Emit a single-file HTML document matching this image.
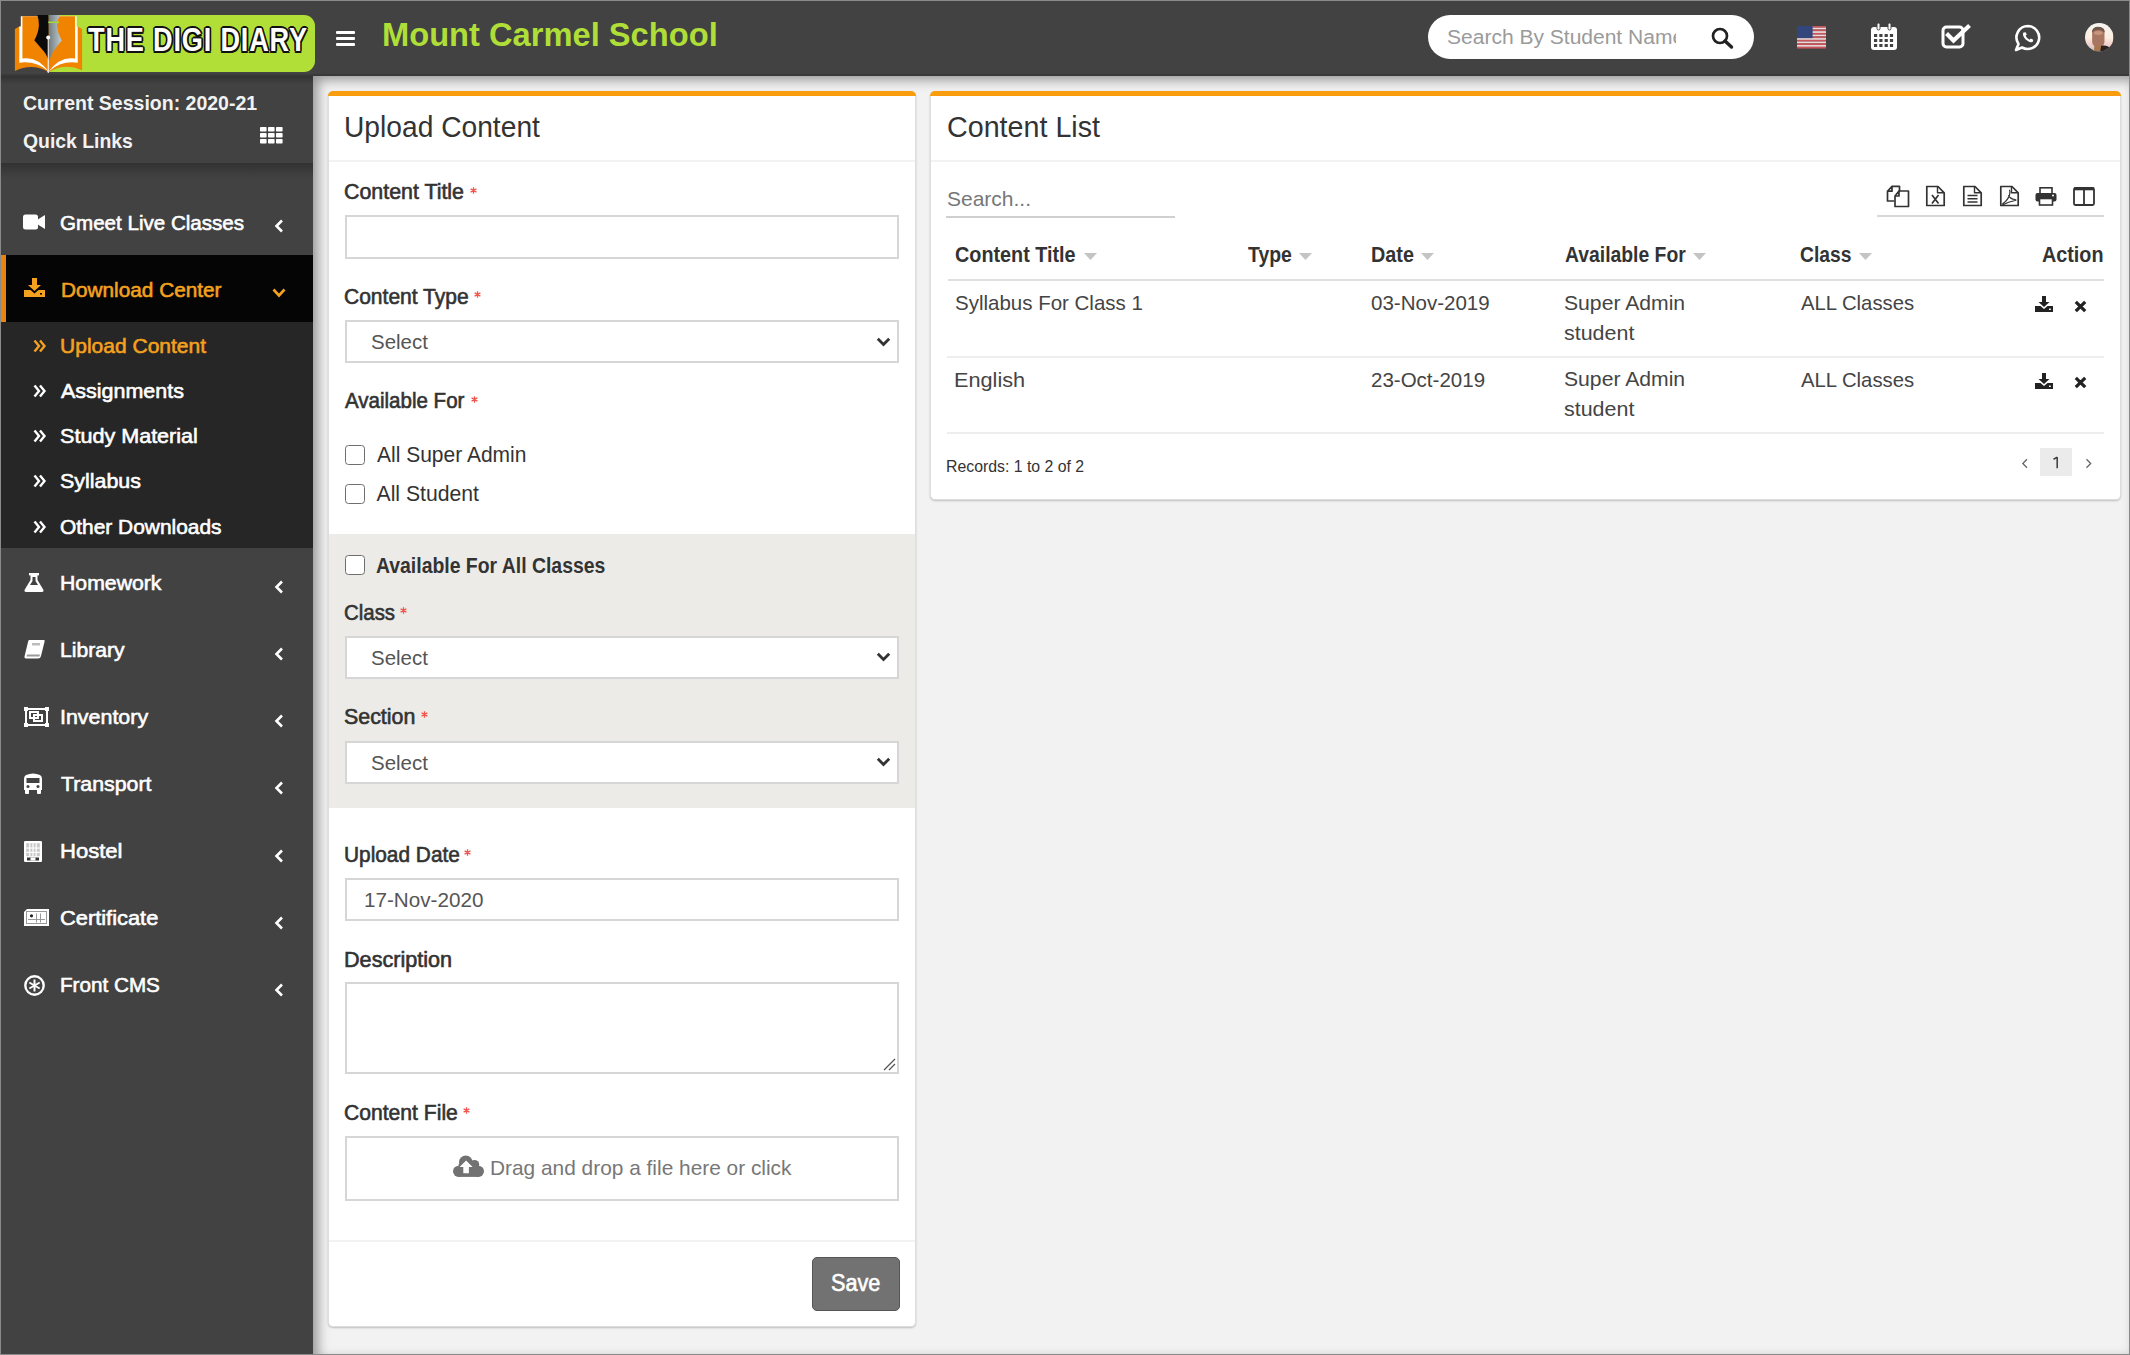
<!DOCTYPE html><html><head><meta charset="utf-8"><style>
*{box-sizing:border-box;margin:0;padding:0}
html,body{width:2130px;height:1355px;overflow:hidden;background:#f2f2f2;font-family:"Liberation Sans",sans-serif}
.a{position:absolute}
.t{position:absolute;white-space:nowrap;transform-origin:0 0;font-family:"Liberation Sans",sans-serif}
svg{position:absolute;overflow:visible}
</style></head><body><div class="a" style="left:313px;top:76px;width:1817px;height:1279px;box-shadow:inset 5px 4px 12px rgba(0,0,0,.38)"></div><div class="a" style="left:0;top:0;width:2130px;height:76px;background:#424242;border-bottom:2px solid #393939"></div><div class="a" style="left:47px;top:15px;width:268px;height:57px;background:#b1df37;border-radius:0 11px 11px 0"></div><svg class="a" style="left:15px;top:15px" width="68" height="58" viewBox="0 0 68 58">
<defs><linearGradient id="nibg" x1="0" y1="0" x2="1" y2="0"><stop offset="0" stop-color="#6f7c80"/><stop offset="1" stop-color="#c2cdd1"/></linearGradient></defs>
<path d="M-0.1 14.1 L4.3 11.5 L33.7 11.5 L33.7 57 Q17 47.5 -0.1 56 Z" fill="#f08300"/>
<path d="M67.1 14.1 L62.7 11.5 L33.7 11.5 L33.7 57 Q50 47.5 67.1 55.2 Z" fill="#f08300"/>
<path d="M5.8 1.2 H33.7 V56.5 Q21 45.5 4.3 47.7 V11.5 L5.8 11.5 Z" fill="#ffffff"/>
<path d="M61.6 1.2 H33.7 V56.5 Q46 45.5 62.7 47.7 V11.5 L61.6 11.5 Z" fill="#ffffff"/>
<path d="M7.4 1.2 H33.7 V56.5 Q22 41 7.4 43.5 Z" fill="#f08300"/>
<path d="M60.1 1.2 H33.7 V56.5 Q45 41 60.1 43.5 Z" fill="#f08300"/>
<path d="M22.4 0 H33.7 V45.6 Q31 38 27 34.3 L19.3 25.2 Q23.5 18 23.9 10.5 Q23.8 4 22.4 0 Z" fill="#0b0b0b"/>
<path d="M33.7 0 H45.1 Q42 5 42 10.5 Q42.5 18 46.7 25.5 L39.9 34.3 Q36 39 34.3 45.6 Z" fill="url(#nibg)"/>
<rect x="33.2" y="6.5" width="11" height="1.6" fill="#a6d83a"/>
<circle cx="33.2" cy="22.4" r="2" fill="#fff"/>
<rect x="32.7" y="23" width="1.1" height="35" fill="#f4f4f4"/>
</svg><div class="t" style="left:88px;top:20px;font-size:33.5px;line-height:40px;font-weight:700;color:#fff;letter-spacing:1.0px;transform:scaleX(0.81);text-shadow:-2px 0 0 #111,2px 0 0 #111,0 -2px 0 #111,0 2px 0 #111,-1.5px -1.5px 0 #111,1.5px -1.5px 0 #111,-1.5px 1.5px 0 #111,1.5px 1.5px 0 #111">THE DIGI DIARY</div><div class="a" style="left:336px;top:31px;width:19px;height:3px;background:#fff;border-radius:1px"></div><div class="a" style="left:336px;top:37px;width:19px;height:3px;background:#fff;border-radius:1px"></div><div class="a" style="left:336px;top:43px;width:19px;height:3px;background:#fff;border-radius:1px"></div><div class="t" style="left:382.05px;top:18.03px;font-size:33.5px;line-height:33.5px;font-weight:700;color:#b0de38;transform:scaleX(0.9750);">Mount Carmel School</div><div class="a" style="left:1428px;top:15px;width:326px;height:44px;background:#fff;border-radius:22px"></div><div class="a" style="left:1440px;top:15px;width:236px;height:44px;overflow:hidden"><div class="t" style="left:1447.02px;top:27.37px;font-size:20.5px;line-height:20.5px;font-weight:400;color:#9a9a9a;transform:scaleX(0.9850);">Search By Student Name</div></div><svg class="a" style="left:1711px;top:27px" width="23" height="21" viewBox="0 0 23 21"><circle cx="9" cy="9" r="7" fill="none" stroke="#222" stroke-width="2.7"/><path d="M14 14 L20.5 20" stroke="#222" stroke-width="3.4" stroke-linecap="round"/></svg><svg class="a" style="left:1797px;top:25.5px" width="29" height="22.5" viewBox="0 0 29 22.5"><rect x="0" y="0.000" width="29" height="1.781" fill="#c9545c"/><rect x="0" y="1.731" width="29" height="1.781" fill="#eedcdc"/><rect x="0" y="3.462" width="29" height="1.781" fill="#c9545c"/><rect x="0" y="5.192" width="29" height="1.781" fill="#eedcdc"/><rect x="0" y="6.923" width="29" height="1.781" fill="#c9545c"/><rect x="0" y="8.654" width="29" height="1.781" fill="#eedcdc"/><rect x="0" y="10.385" width="29" height="1.781" fill="#c9545c"/><rect x="0" y="12.115" width="29" height="1.781" fill="#eedcdc"/><rect x="0" y="13.846" width="29" height="1.781" fill="#c9545c"/><rect x="0" y="15.577" width="29" height="1.781" fill="#eedcdc"/><rect x="0" y="17.308" width="29" height="1.781" fill="#c9545c"/><rect x="0" y="19.038" width="29" height="1.781" fill="#eedcdc"/><rect x="0" y="20.769" width="29" height="1.781" fill="#c9545c"/><rect x="0" y="0" width="15.6" height="12.1" fill="#33467c"/></svg><svg class="a" style="left:1870px;top:23px" width="28" height="28" viewBox="0 0 28 28"><rect x="1" y="4" width="26" height="23" rx="3" fill="#fff"/><rect x="7" y="0" width="3" height="7" rx="1.5" fill="#fff" stroke="#424242" stroke-width="1"/><rect x="18" y="0" width="3" height="7" rx="1.5" fill="#fff" stroke="#424242" stroke-width="1"/><rect x="4.0" y="11" width="3.2" height="3" fill="#424242"/><rect x="9.3" y="11" width="3.2" height="3" fill="#424242"/><rect x="14.6" y="11" width="3.2" height="3" fill="#424242"/><rect x="19.9" y="11" width="3.2" height="3" fill="#424242"/><rect x="4.0" y="16" width="3.2" height="3" fill="#424242"/><rect x="9.3" y="16" width="3.2" height="3" fill="#424242"/><rect x="14.6" y="16" width="3.2" height="3" fill="#424242"/><rect x="19.9" y="16" width="3.2" height="3" fill="#424242"/><rect x="4.0" y="21" width="3.2" height="3" fill="#424242"/><rect x="9.3" y="21" width="3.2" height="3" fill="#424242"/><rect x="14.6" y="21" width="3.2" height="3" fill="#424242"/><rect x="19.9" y="21" width="3.2" height="3" fill="#424242"/></svg><svg class="a" style="left:1941px;top:24px" width="30" height="26" viewBox="0 0 30 26"><rect x="2" y="3" width="20" height="20" rx="3.5" fill="none" stroke="#fff" stroke-width="3"/><path d="M7 11 L12.5 16.5 L27 3" fill="none" stroke="#fff" stroke-width="4.2" stroke-linecap="square"/></svg><svg class="a" style="left:2014px;top:24px" width="28" height="27" viewBox="0 0 28 27"><path d="M14 2 A11.5 11.5 0 1 1 8 23.5 L2 26 L4.5 20 A11.5 11.5 0 0 1 14 2 Z" fill="none" stroke="#fff" stroke-width="2.6" stroke-linejoin="round"/><path d="M9.5 8.5 Q8.5 9.5 9.2 11.8 Q11 16 15.5 18 Q17.8 18.8 19 17.5 L19.2 15.8 L16.8 14.6 L15.6 15.8 Q12.8 14.5 11.6 11.8 L12.8 10.6 L11.6 8.2 Z" fill="#fff"/></svg><svg class="a" style="left:2085px;top:22.5px" width="28.5" height="28.5" viewBox="0 0 30 30"><defs><clipPath id="avc"><circle cx="15" cy="15" r="15"/></clipPath><linearGradient id="avg" x1="0" y1="0" x2="0" y2="1"><stop offset="0" stop-color="#f4f3f1"/><stop offset="0.5" stop-color="#fcefe2"/><stop offset="0.78" stop-color="#eecdc8"/><stop offset="1" stop-color="#b4c9df"/></linearGradient></defs><g clip-path="url(#avc)"><rect width="30" height="30" fill="url(#avg)"/><path d="M7.5 9 Q8 4.5 14 4.5 Q20 4.5 20.5 9 V20 Q20 25 14 26 Q8 25 7.5 20 Z" fill="#a97662"/><path d="M7.3 10 Q7.5 4 14 4 Q20.8 4.2 20.8 10 Q17 7 14 7.2 Q10 7.3 7.3 10Z" fill="#6e584c"/><ellipse cx="14" cy="10.5" rx="4.5" ry="2" fill="#c9967b"/><path d="M10 24 L18 24 L19 30 H9 Z" fill="#a8774f"/><path d="M17 24 Q23 22.5 27 27 L28 30 H16 Z" fill="#2b2220"/></g></svg><div class="a" style="left:0;top:76px;width:313px;height:1279px;background:#424242"></div><div class="a" style="left:0;top:163px;width:313px;height:15px;background:linear-gradient(#323232,#424242)"></div><div class="a" style="left:0;top:76px;width:313px;height:8px;background:linear-gradient(rgba(0,0,0,.25),rgba(0,0,0,0))"></div><div class="t" style="left:23.14px;top:92.96px;font-size:20.4px;line-height:20.4px;font-weight:700;color:#f2f2f2;transform:scaleX(0.9564);">Current Session: 2020-21</div><div class="t" style="left:23.15px;top:130.96px;font-size:20.4px;line-height:20.4px;font-weight:700;color:#f2f2f2;transform:scaleX(0.9509);">Quick Links</div><svg class="a" style="left:260px;top:127px" width="23" height="17" viewBox="0 0 23 17"><rect x="0.0" y="0.0" width="6.6" height="4.6" rx="0.8" fill="#fff"/><rect x="8.0" y="0.0" width="6.6" height="4.6" rx="0.8" fill="#fff"/><rect x="16.0" y="0.0" width="6.6" height="4.6" rx="0.8" fill="#fff"/><rect x="0.0" y="6.0" width="6.6" height="4.6" rx="0.8" fill="#fff"/><rect x="8.0" y="6.0" width="6.6" height="4.6" rx="0.8" fill="#fff"/><rect x="16.0" y="6.0" width="6.6" height="4.6" rx="0.8" fill="#fff"/><rect x="0.0" y="12.0" width="6.6" height="4.6" rx="0.8" fill="#fff"/><rect x="8.0" y="12.0" width="6.6" height="4.6" rx="0.8" fill="#fff"/><rect x="16.0" y="12.0" width="6.6" height="4.6" rx="0.8" fill="#fff"/></svg><div class="a" style="left:0;top:255px;width:313px;height:67px;background:#050505"></div><div class="a" style="left:1px;top:255px;width:5px;height:67px;background:#e8830e"></div><div class="a" style="left:0;top:322px;width:313px;height:226px;background:#262626"></div><div class="t" style="left:59.82px;top:211.55px;font-size:21px;line-height:21px;font-weight:400;color:#ffffff;-webkit-text-stroke:0.6px #ffffff;transform:scaleX(0.9797);">Gmeet Live Classes</div><svg class="a" style="left:274px;top:219px" width="10" height="14" viewBox="0 0 10 14"><path d="M8 1.5 L2.5 7 L8 12.5" fill="none" stroke="#fff" stroke-width="2.6"/></svg><div class="t" style="left:59.89px;top:571.85px;font-size:21px;line-height:21px;font-weight:400;color:#ffffff;-webkit-text-stroke:0.6px #ffffff;transform:scaleX(1.0110);">Homework</div><svg class="a" style="left:274px;top:580px" width="10" height="14" viewBox="0 0 10 14"><path d="M8 1.5 L2.5 7 L8 12.5" fill="none" stroke="#fff" stroke-width="2.6"/></svg><div class="t" style="left:59.89px;top:639.05px;font-size:21px;line-height:21px;font-weight:400;color:#ffffff;-webkit-text-stroke:0.6px #ffffff;transform:scaleX(1.0063);">Library</div><svg class="a" style="left:274px;top:647px" width="10" height="14" viewBox="0 0 10 14"><path d="M8 1.5 L2.5 7 L8 12.5" fill="none" stroke="#fff" stroke-width="2.6"/></svg><div class="t" style="left:59.88px;top:706.05px;font-size:21px;line-height:21px;font-weight:400;color:#ffffff;-webkit-text-stroke:0.6px #ffffff;transform:scaleX(1.0198);">Inventory</div><svg class="a" style="left:274px;top:714px" width="10" height="14" viewBox="0 0 10 14"><path d="M8 1.5 L2.5 7 L8 12.5" fill="none" stroke="#fff" stroke-width="2.6"/></svg><div class="t" style="left:60.90px;top:773.05px;font-size:21px;line-height:21px;font-weight:400;color:#ffffff;-webkit-text-stroke:0.6px #ffffff;transform:scaleX(1.0157);">Transport</div><svg class="a" style="left:274px;top:781px" width="10" height="14" viewBox="0 0 10 14"><path d="M8 1.5 L2.5 7 L8 12.5" fill="none" stroke="#fff" stroke-width="2.6"/></svg><div class="t" style="left:59.85px;top:840.15px;font-size:21px;line-height:21px;font-weight:400;color:#ffffff;-webkit-text-stroke:0.6px #ffffff;transform:scaleX(1.0500);">Hostel</div><svg class="a" style="left:274px;top:848.5px" width="10" height="14" viewBox="0 0 10 14"><path d="M8 1.5 L2.5 7 L8 12.5" fill="none" stroke="#fff" stroke-width="2.6"/></svg><div class="t" style="left:59.92px;top:974.15px;font-size:21px;line-height:21px;font-weight:400;color:#ffffff;-webkit-text-stroke:0.6px #ffffff;transform:scaleX(0.9840);">Front CMS</div><svg class="a" style="left:274px;top:982.5px" width="10" height="14" viewBox="0 0 10 14"><path d="M8 1.5 L2.5 7 L8 12.5" fill="none" stroke="#fff" stroke-width="2.6"/></svg><div class="t" style="left:59.86px;top:907.15px;font-size:21px;line-height:21px;font-weight:400;color:#ffffff;-webkit-text-stroke:0.6px #ffffff;transform:scaleX(1.0398);">Certificate</div><svg class="a" style="left:274px;top:915.5px" width="10" height="14" viewBox="0 0 10 14"><path d="M8 1.5 L2.5 7 L8 12.5" fill="none" stroke="#fff" stroke-width="2.6"/></svg><div class="t" style="left:60.61px;top:278.55px;font-size:21px;line-height:21px;font-weight:400;color:#f4a11f;-webkit-text-stroke:0.6px #f4a11f;transform:scaleX(0.9894);">Download Center</div><svg class="a" style="left:272px;top:288px" width="14" height="10" viewBox="0 0 14 10"><path d="M1.5 1.5 L7 7.5 L12.5 1.5" fill="none" stroke="#f4a11f" stroke-width="2.6"/></svg><div class="t" style="left:60.10px;top:334.95px;font-size:21px;line-height:21px;font-weight:400;color:#f4a11f;-webkit-text-stroke:0.6px #f4a11f;">Upload Content</div><div class="t" style="left:61.10px;top:380.15px;font-size:21px;line-height:21px;font-weight:400;color:#ffffff;-webkit-text-stroke:0.6px #ffffff;transform:scaleX(1.0225);">Assignments</div><div class="t" style="left:60.07px;top:425.15px;font-size:21px;line-height:21px;font-weight:400;color:#ffffff;-webkit-text-stroke:0.6px #ffffff;transform:scaleX(1.0273);">Study Material</div><div class="t" style="left:60.08px;top:470.15px;font-size:21px;line-height:21px;font-weight:400;color:#ffffff;-webkit-text-stroke:0.6px #ffffff;transform:scaleX(1.0192);">Syllabus</div><div class="t" style="left:60.10px;top:515.55px;font-size:21px;line-height:21px;font-weight:400;color:#ffffff;-webkit-text-stroke:0.6px #ffffff;transform:scaleX(0.9957);">Other Downloads</div><svg class="a" style="left:33px;top:339px" width="13" height="14" viewBox="0 0 13 14"><path d="M1.5 1.5 L6 7 L1.5 12.5 M7 1.5 L11.5 7 L7 12.5" fill="none" stroke="#f4a11f" stroke-width="2.4"/></svg><svg class="a" style="left:33px;top:384px" width="13" height="14" viewBox="0 0 13 14"><path d="M1.5 1.5 L6 7 L1.5 12.5 M7 1.5 L11.5 7 L7 12.5" fill="none" stroke="#fff" stroke-width="2.4"/></svg><svg class="a" style="left:33px;top:429px" width="13" height="14" viewBox="0 0 13 14"><path d="M1.5 1.5 L6 7 L1.5 12.5 M7 1.5 L11.5 7 L7 12.5" fill="none" stroke="#fff" stroke-width="2.4"/></svg><svg class="a" style="left:33px;top:474px" width="13" height="14" viewBox="0 0 13 14"><path d="M1.5 1.5 L6 7 L1.5 12.5 M7 1.5 L11.5 7 L7 12.5" fill="none" stroke="#fff" stroke-width="2.4"/></svg><svg class="a" style="left:33px;top:520px" width="13" height="14" viewBox="0 0 13 14"><path d="M1.5 1.5 L6 7 L1.5 12.5 M7 1.5 L11.5 7 L7 12.5" fill="none" stroke="#fff" stroke-width="2.4"/></svg><svg class="a" style="left:23px;top:214px" width="23" height="16" viewBox="0 0 23 16"><rect x="0" y="0.5" width="15" height="15" rx="2.5" fill="#fff"/><path d="M14 6 L22 1 L22 15 L14 10 Z" fill="#fff"/></svg><svg class="a" style="left:24px;top:278px" width="21" height="19" viewBox="0 0 21 19"><path d="M8 0 H13 V7 H17 L10.5 13 L4 7 H8 Z" fill="#f4a11f"/><path d="M0 12 H6.5 L10.5 15.5 L14.5 12 H21 V19 H0 Z" fill="#f4a11f"/><rect x="16" y="15" width="2" height="1.6" fill="#050505"/></svg><svg class="a" style="left:24px;top:573px" width="20" height="19" viewBox="0 0 20 19"><rect x="5" y="0" width="10" height="2.4" fill="#fff"/><path d="M6.5 2 V7 L0.5 17 Q0 19 2 19 H18 Q20 19 19.5 17 L13.5 7 V2 Z" fill="#fff"/><path d="M8.5 4 V8 L6 12 H14 L11.5 8 V4Z" fill="#424242"/></svg><svg class="a" style="left:24px;top:640px" width="21" height="19" viewBox="0 0 21 19"><path d="M5 0 H20 Q21 0 20.6 1.5 L17 16 Q16.5 18.5 14 18.5 H2 Q0 18.5 0.5 16.5 L4 2 Q4.5 0 5 0Z" fill="#fff"/><path d="M3 14.5 H16 L15.4 16.5 H2.5 Z" fill="#9a9a9a"/><rect x="8" y="3" width="8" height="2.5" fill="#bdbdbd"/></svg><svg class="a" style="left:24px;top:707px" width="25" height="20" viewBox="0 0 25 20"><rect x="2" y="2" width="21" height="16" fill="none" stroke="#fff" stroke-width="2"/><rect x="0" y="0" width="4" height="4" fill="#fff"/><rect x="21" y="0" width="4" height="4" fill="#fff"/><rect x="0" y="16" width="4" height="4" fill="#fff"/><rect x="21" y="16" width="4" height="4" fill="#fff"/><rect x="6" y="5" width="8" height="6" fill="none" stroke="#fff" stroke-width="2"/><rect x="10" y="8" width="8" height="6" fill="none" stroke="#fff" stroke-width="2"/></svg><svg class="a" style="left:23px;top:773px" width="20" height="21" viewBox="0 0 20 21"><path d="M3 2 Q10 -1 17 2 Q19 3 19 6 V17 H1 V6 Q1 3 3 2Z" fill="#fff"/><rect x="3.5" y="5" width="13" height="5" fill="#424242"/><rect x="2" y="16" width="4" height="5" rx="1" fill="#fff"/><rect x="14" y="16" width="4" height="5" rx="1" fill="#fff"/><circle cx="5" cy="13.5" r="1.5" fill="#424242"/><circle cx="15" cy="13.5" r="1.5" fill="#424242"/></svg><svg class="a" style="left:24px;top:841px" width="18" height="21" viewBox="0 0 18 21"><rect x="0" y="0" width="18" height="21" rx="1.2" fill="#fff"/><rect x="2.2" y="2.2" width="13.6" height="13" fill="#c8c8c8"/><g fill="#fff"><rect x="5.2" y="2.2" width="1.2" height="13"/><rect x="8.4" y="2.2" width="1.2" height="13"/><rect x="11.6" y="2.2" width="1.2" height="13"/><rect x="2.2" y="6.5" width="13.6" height="1.1"/><rect x="2.2" y="10.8" width="13.6" height="1.1"/></g><rect x="3" y="16.5" width="12" height="3" fill="#333"/><rect x="6.5" y="16.5" width="5" height="3" fill="#fff"/></svg><svg class="a" style="left:24px;top:909px" width="25" height="17" viewBox="0 0 25 17"><path d="M0 3 L3 0 H25 V17 H0 Z" fill="#fff"/><rect x="2.5" y="2.5" width="20" height="12" fill="none" stroke="#9a9a9a" stroke-width="1"/><circle cx="7.5" cy="6.8" r="1.6" fill="#222"/><g fill="#9a9a9a"><rect x="12" y="4.5" width="1" height="9"/><rect x="16" y="4.5" width="1" height="9"/><rect x="4" y="10" width="17" height="1"/></g></svg><svg class="a" style="left:24px;top:975px" width="21" height="21" viewBox="0 0 21 21"><circle cx="10.5" cy="10.5" r="9.2" fill="none" stroke="#fff" stroke-width="2.4"/><g stroke="#fff" stroke-width="2"><path d="M10.5 4.5 V16.5"/><path d="M5.3 7.5 L15.7 13.5"/><path d="M5.3 13.5 L15.7 7.5"/></g></svg><div class="a" style="left:1440px;top:15px;width:236px;height:44px;overflow:hidden"><div class="t" style="left:6.97px;top:12.37px;font-size:20.5px;line-height:20.5px;color:#9a9a9a;transform:scaleX(1.025)">Search By Student Name</div></div><div class="a" style="left:328px;top:91px;width:588px;height:1236px;background:#fff;border:1px solid #dedede;border-top:none;border-radius:5px;box-shadow:0 1px 2px rgba(0,0,0,.22)"></div><div class="a" style="left:328px;top:91px;width:588px;height:5px;background:#f99d0e;border-radius:5px 5px 0 0"></div><div class="a" style="left:329px;top:160px;width:586px;height:1.5px;background:#f2f2f2"></div><div class="t" style="left:343.50px;top:111.94px;font-size:29.6px;line-height:29.6px;font-weight:400;color:#333333;transform:scaleX(0.9525);">Upload Content</div><div class="t" style="left:344.39px;top:181.08px;font-size:21.2px;line-height:21.2px;font-weight:400;color:#333333;-webkit-text-stroke:0.6px #333333;transform:scaleX(1.0085);">Content Title</div><svg class="a" style="left:470px;top:187px" width="7" height="7" viewBox="0 0 7 7"><path d="M3.5 0.3 V6.7 M0.6 1.9 L6.4 5.1 M0.6 5.1 L6.4 1.9" stroke="#f0544c" stroke-width="1.3"/></svg><div class="a" style="left:345px;top:215px;width:554px;height:44px;background:#fff;border:2px solid #d6d6d6"></div><div class="t" style="left:344.41px;top:286.08px;font-size:21.2px;line-height:21.2px;font-weight:400;color:#333333;-webkit-text-stroke:0.6px #333333;transform:scaleX(0.9919);">Content Type</div><svg class="a" style="left:474px;top:291px" width="7" height="7" viewBox="0 0 7 7"><path d="M3.5 0.3 V6.7 M0.6 1.9 L6.4 5.1 M0.6 5.1 L6.4 1.9" stroke="#f0544c" stroke-width="1.3"/></svg><div class="a" style="left:345px;top:320px;width:554px;height:43px;background:#fff;border:2px solid #d6d6d6"></div><div class="t" style="left:371.38px;top:332.30px;font-size:20px;line-height:20px;font-weight:400;color:#555555;transform:scaleX(1.0236);">Select</div><svg class="a" style="left:876px;top:337px" width="15" height="10" viewBox="0 0 15 10"><path d="M1.8 1.8 L7.5 7.5 L13.2 1.8" fill="none" stroke="#333" stroke-width="2.8"/></svg><div class="t" style="left:345.40px;top:390.38px;font-size:21.2px;line-height:21.2px;font-weight:400;color:#333333;-webkit-text-stroke:0.6px #333333;transform:scaleX(0.9685);">Available For</div><svg class="a" style="left:471px;top:396px" width="7" height="7" viewBox="0 0 7 7"><path d="M3.5 0.3 V6.7 M0.6 1.9 L6.4 5.1 M0.6 5.1 L6.4 1.9" stroke="#f0544c" stroke-width="1.3"/></svg><div class="a" style="left:345px;top:445px;width:20px;height:20px;background:#fff;border:1.8px solid #6e6e6e;border-radius:3.5px"></div><div class="t" style="left:376.50px;top:443.88px;font-size:21.2px;line-height:21.2px;font-weight:400;color:#333333;transform:scaleX(0.9913);">All Super Admin</div><div class="a" style="left:345px;top:484px;width:20px;height:20px;background:#fff;border:1.8px solid #6e6e6e;border-radius:3.5px"></div><div class="t" style="left:376.50px;top:482.58px;font-size:21.2px;line-height:21.2px;font-weight:400;color:#333333;">All Student</div><div class="a" style="left:329px;top:534px;width:586px;height:274px;background:#ecebe7"></div><div class="a" style="left:345px;top:555px;width:20px;height:20px;background:#fff;border:1.8px solid #6e6e6e;border-radius:3.5px"></div><div class="t" style="left:375.58px;top:555.08px;font-size:21.2px;line-height:21.2px;font-weight:700;color:#333333;transform:scaleX(0.9157);">Available For All Classes</div><div class="t" style="left:344.44px;top:601.58px;font-size:21.2px;line-height:21.2px;font-weight:400;color:#333333;-webkit-text-stroke:0.6px #333333;transform:scaleX(0.9635);">Class</div><svg class="a" style="left:400px;top:607px" width="7" height="7" viewBox="0 0 7 7"><path d="M3.5 0.3 V6.7 M0.6 1.9 L6.4 5.1 M0.6 5.1 L6.4 1.9" stroke="#f0544c" stroke-width="1.3"/></svg><div class="a" style="left:345px;top:636px;width:554px;height:43px;background:#fff;border:2px solid #d6d6d6"></div><div class="t" style="left:371.38px;top:648.00px;font-size:20px;line-height:20px;font-weight:400;color:#555555;transform:scaleX(1.0236);">Select</div><svg class="a" style="left:876px;top:652px" width="15" height="10" viewBox="0 0 15 10"><path d="M1.8 1.8 L7.5 7.5 L13.2 1.8" fill="none" stroke="#333" stroke-width="2.8"/></svg><div class="t" style="left:344.39px;top:706.18px;font-size:21.2px;line-height:21.2px;font-weight:400;color:#333333;-webkit-text-stroke:0.6px #333333;transform:scaleX(1.0087);">Section</div><svg class="a" style="left:421px;top:711px" width="7" height="7" viewBox="0 0 7 7"><path d="M3.5 0.3 V6.7 M0.6 1.9 L6.4 5.1 M0.6 5.1 L6.4 1.9" stroke="#f0544c" stroke-width="1.3"/></svg><div class="a" style="left:345px;top:741px;width:554px;height:43px;background:#fff;border:2px solid #d6d6d6"></div><div class="t" style="left:371.38px;top:752.70px;font-size:20px;line-height:20px;font-weight:400;color:#555555;transform:scaleX(1.0236);">Select</div><svg class="a" style="left:876px;top:757px" width="15" height="10" viewBox="0 0 15 10"><path d="M1.8 1.8 L7.5 7.5 L13.2 1.8" fill="none" stroke="#333" stroke-width="2.8"/></svg><div class="t" style="left:344.42px;top:844.38px;font-size:21.2px;line-height:21.2px;font-weight:400;color:#333333;-webkit-text-stroke:0.6px #333333;transform:scaleX(0.9836);">Upload Date</div><svg class="a" style="left:464px;top:849px" width="7" height="7" viewBox="0 0 7 7"><path d="M3.5 0.3 V6.7 M0.6 1.9 L6.4 5.1 M0.6 5.1 L6.4 1.9" stroke="#f0544c" stroke-width="1.3"/></svg><div class="a" style="left:345px;top:878px;width:554px;height:43px;background:#fff;border:2px solid #d6d6d6"></div><div class="t" style="left:364.47px;top:889.80px;font-size:20px;line-height:20px;font-weight:400;color:#555555;transform:scaleX(1.0325);">17-Nov-2020</div><div class="t" style="left:344.38px;top:948.68px;font-size:21.2px;line-height:21.2px;font-weight:400;color:#333333;-webkit-text-stroke:0.6px #333333;transform:scaleX(1.0202);">Description</div><div class="a" style="left:345px;top:982px;width:554px;height:92px;background:#fff;border:2px solid #d6d6d6"></div><svg class="a" style="left:882px;top:1057px" width="14" height="14" viewBox="0 0 14 14"><path d="M2 13 L13 2 M7 13 L13 7" stroke="#555" stroke-width="1.3"/></svg><div class="t" style="left:344.40px;top:1101.68px;font-size:21.2px;line-height:21.2px;font-weight:400;color:#333333;-webkit-text-stroke:0.6px #333333;transform:scaleX(0.9965);">Content File</div><svg class="a" style="left:463px;top:1107px" width="7" height="7" viewBox="0 0 7 7"><path d="M3.5 0.3 V6.7 M0.6 1.9 L6.4 5.1 M0.6 5.1 L6.4 1.9" stroke="#f0544c" stroke-width="1.3"/></svg><div class="a" style="left:345px;top:1136px;width:554px;height:65px;background:#fff;border:2px solid #d6d6d6"></div><svg class="a" style="left:453px;top:1155px" width="31" height="22" viewBox="0 0 31 22"><g fill="#727272"><circle cx="5.6" cy="16.3" r="5.6"/><circle cx="12.8" cy="7.4" r="6.8"/><circle cx="21.6" cy="9.6" r="4.6"/><circle cx="25.4" cy="16.3" r="5.6"/><rect x="5.6" y="9" width="19.8" height="12.9"/></g><path d="M13.1 5.4 L6.6 12.1 H10.3 V18.3 H15.9 V12.1 H19.6 Z" fill="#fff"/></svg><div class="t" style="left:490.01px;top:1157.15px;font-size:21px;line-height:21px;font-weight:400;color:#777777;transform:scaleX(0.9934);">Drag and drop a file here or click</div><div class="a" style="left:329px;top:1240px;width:586px;height:1.5px;background:#f2f2f2"></div><div class="a" style="left:812px;top:1257px;width:88px;height:54px;background:#727272;border:1.5px solid #555;border-radius:5px"></div><div class="t" style="left:831.06px;top:1272.05px;font-size:23px;line-height:23px;font-weight:400;color:#ffffff;-webkit-text-stroke:0.6px #ffffff;transform:scaleX(0.9412);">Save</div><div class="a" style="left:930px;top:91px;width:1191px;height:409px;background:#fff;border:1px solid #dedede;border-top:none;border-radius:5px;box-shadow:0 1px 2px rgba(0,0,0,.22)"></div><div class="a" style="left:930px;top:91px;width:1191px;height:5px;background:#f99d0e;border-radius:5px 5px 0 0"></div><div class="a" style="left:931px;top:160px;width:1189px;height:1.5px;background:#f2f2f2"></div><div class="t" style="left:946.93px;top:111.84px;font-size:29.6px;line-height:29.6px;font-weight:400;color:#333333;transform:scaleX(0.9688);">Content List</div><div class="t" style="left:947.00px;top:187.95px;font-size:21px;line-height:21px;font-weight:400;color:#777777;">Search...</div><div class="a" style="left:946px;top:216px;width:229px;height:2px;background:#d0d0d0"></div><div class="a" style="left:1877px;top:215px;width:227px;height:2px;background:#d8d8d8"></div><svg class="a" style="left:1886px;top:185px" width="24" height="23" viewBox="0 0 24 23"><path d="M6 1.3 H13.5 V6.5 M1.5 6.2 L6 1.3 V6.2 H1.5 V16 H8" fill="none" stroke="#333" stroke-width="1.7" stroke-linejoin="round"/><path d="M13 6 H22.5 V21.5 H9 V11 L13 6 V11 H9" fill="none" stroke="#333" stroke-width="1.7" stroke-linejoin="round"/></svg><svg class="a" style="left:1925px;top:185px" width="21" height="22" viewBox="0 0 21 22"><path d="M1.8 1.5 H13 L19.2 7.8 V20.5 H1.8 Z" fill="none" stroke="#333" stroke-width="1.7" stroke-linejoin="round"/><path d="M12.5 1.5 V7.8 H19" fill="none" stroke="#333" stroke-width="1.4" stroke-linejoin="round"/><path d="M7 10 L13.5 18.5 M13.5 10 L7 18.5" stroke="#333" stroke-width="1.7"/></svg><svg class="a" style="left:1962px;top:185px" width="21" height="22" viewBox="0 0 21 22"><path d="M1.8 1.5 H13 L19.2 7.8 V20.5 H1.8 Z" fill="none" stroke="#333" stroke-width="1.7" stroke-linejoin="round"/><path d="M12.5 1.5 V7.8 H19" fill="none" stroke="#333" stroke-width="1.4" stroke-linejoin="round"/><path d="M5.5 10.5 H15.5 M5.5 13.8 H15.5 M5.5 17 H15.5" stroke="#333" stroke-width="1.5"/></svg><svg class="a" style="left:1999px;top:185px" width="21" height="22" viewBox="0 0 21 22"><path d="M1.8 1.5 H13 L19.2 7.8 V20.5 H1.8 Z" fill="none" stroke="#333" stroke-width="1.7" stroke-linejoin="round"/><path d="M12.5 1.5 V7.8 H19" fill="none" stroke="#333" stroke-width="1.4" stroke-linejoin="round"/><path d="M10 5 Q11.5 5 10.5 10 Q9 15 4 18.5 Q3 19.5 4.5 19.5 Q9 17 16 15.5 Q18 15 16 14.5 Q11 14 9.5 10" fill="none" stroke="#333" stroke-width="1.2"/></svg><svg class="a" style="left:2035px;top:187px" width="22" height="19" viewBox="0 0 22 19"><rect x="5" y="0.8" width="12" height="6" fill="none" stroke="#333" stroke-width="1.6"/><rect x="0.5" y="6" width="21" height="8.5" rx="2" fill="#333"/><rect x="4.5" y="11.5" width="13" height="6.5" fill="#fff" stroke="#333" stroke-width="1.6"/><circle cx="18" cy="8.5" r="1" fill="#fff"/></svg><svg class="a" style="left:2073px;top:187px" width="22" height="19" viewBox="0 0 22 19"><rect x="1" y="1" width="20" height="17" rx="1.5" fill="none" stroke="#333" stroke-width="1.8"/><path d="M1 1.8 H21" stroke="#333" stroke-width="3"/><path d="M11 1 V18" stroke="#333" stroke-width="1.8"/></svg><div class="t" style="left:955.07px;top:244.18px;font-size:21.2px;line-height:21.2px;font-weight:700;color:#333333;transform:scaleX(0.9344);">Content Title</div><div class="t" style="left:1247.70px;top:244.18px;font-size:21.2px;line-height:21.2px;font-weight:700;color:#333333;transform:scaleX(0.9170);">Type</div><div class="t" style="left:1370.76px;top:244.18px;font-size:21.2px;line-height:21.2px;font-weight:700;color:#333333;transform:scaleX(0.9356);">Date</div><div class="t" style="left:1564.59px;top:244.18px;font-size:21.2px;line-height:21.2px;font-weight:700;color:#333333;transform:scaleX(0.9130);">Available For</div><div class="t" style="left:1800.09px;top:244.18px;font-size:21.2px;line-height:21.2px;font-weight:700;color:#333333;transform:scaleX(0.9091);">Class</div><div class="t" style="left:2042.07px;top:244.18px;font-size:21.2px;line-height:21.2px;font-weight:700;color:#333333;transform:scaleX(0.9328);">Action</div><svg class="a" style="left:1084px;top:253px" width="13" height="7" viewBox="0 0 13 7"><path d="M0 0 H13 L6.5 7 Z" fill="#c4c4c4"/></svg><svg class="a" style="left:1299px;top:253px" width="13" height="7" viewBox="0 0 13 7"><path d="M0 0 H13 L6.5 7 Z" fill="#c4c4c4"/></svg><svg class="a" style="left:1421px;top:253px" width="13" height="7" viewBox="0 0 13 7"><path d="M0 0 H13 L6.5 7 Z" fill="#c4c4c4"/></svg><svg class="a" style="left:1693px;top:253px" width="13" height="7" viewBox="0 0 13 7"><path d="M0 0 H13 L6.5 7 Z" fill="#c4c4c4"/></svg><svg class="a" style="left:1859px;top:253px" width="13" height="7" viewBox="0 0 13 7"><path d="M0 0 H13 L6.5 7 Z" fill="#c4c4c4"/></svg><div class="a" style="left:948px;top:279px;width:1156px;height:2px;background:#e0e0e0"></div><div class="a" style="left:947px;top:356px;width:1157px;height:1.5px;background:#eeeeee"></div><div class="a" style="left:947px;top:432px;width:1157px;height:1.5px;background:#eeeeee"></div><div class="t" style="left:955.09px;top:293.14px;font-size:20.3px;line-height:20.3px;font-weight:400;color:#444444;transform:scaleX(1.0103);">Syllabus For Class 1</div><div class="t" style="left:1370.69px;top:293.14px;font-size:20.3px;line-height:20.3px;font-weight:400;color:#444444;transform:scaleX(1.0121);">03-Nov-2019</div><div class="t" style="left:1564.46px;top:293.25px;font-size:20.3px;line-height:20.3px;font-weight:400;color:#444444;transform:scaleX(1.0430);">Super Admin</div><div class="t" style="left:1564.44px;top:322.75px;font-size:20.3px;line-height:20.3px;font-weight:400;color:#444444;transform:scaleX(1.0576);">student</div><div class="t" style="left:1801.00px;top:293.14px;font-size:20.3px;line-height:20.3px;font-weight:400;color:#444444;">ALL Classes</div><div class="t" style="left:953.96px;top:369.55px;font-size:20.3px;line-height:20.3px;font-weight:400;color:#444444;transform:scaleX(1.0698);">English</div><div class="t" style="left:1370.69px;top:369.55px;font-size:20.3px;line-height:20.3px;font-weight:400;color:#444444;transform:scaleX(1.0117);">23-Oct-2019</div><div class="t" style="left:1564.46px;top:369.25px;font-size:20.3px;line-height:20.3px;font-weight:400;color:#444444;transform:scaleX(1.0430);">Super Admin</div><div class="t" style="left:1564.44px;top:399.05px;font-size:20.3px;line-height:20.3px;font-weight:400;color:#444444;transform:scaleX(1.0576);">student</div><div class="t" style="left:1801.00px;top:369.55px;font-size:20.3px;line-height:20.3px;font-weight:400;color:#444444;">ALL Classes</div><svg class="a" style="left:2035px;top:296px" width="18" height="16" viewBox="0 0 18 16"><path d="M7 0 H11 V6 H14.5 L9 11 L3.5 6 H7 Z" fill="#222"/><path d="M0 10 H5.5 L9 13 L12.5 10 H18 V16 H0 Z" fill="#222"/><rect x="14" y="12.6" width="1.8" height="1.4" fill="#fff"/></svg><svg class="a" style="left:2074px;top:299.5px" width="13" height="13" viewBox="0 0 13 13"><path d="M1.8 1.8 L11.2 11.2 M11.2 1.8 L1.8 11.2" stroke="#222" stroke-width="3.2"/></svg><svg class="a" style="left:2035px;top:373px" width="18" height="16" viewBox="0 0 18 16"><path d="M7 0 H11 V6 H14.5 L9 11 L3.5 6 H7 Z" fill="#222"/><path d="M0 10 H5.5 L9 13 L12.5 10 H18 V16 H0 Z" fill="#222"/><rect x="14" y="12.6" width="1.8" height="1.4" fill="#fff"/></svg><svg class="a" style="left:2074px;top:376px" width="13" height="13" viewBox="0 0 13 13"><path d="M1.8 1.8 L11.2 11.2 M11.2 1.8 L1.8 11.2" stroke="#222" stroke-width="3.2"/></svg><div class="t" style="left:946.01px;top:459.30px;font-size:16px;line-height:16px;font-weight:400;color:#333333;transform:scaleX(0.9891);">Records: 1 to 2 of 2</div><div class="a" style="left:2040px;top:448px;width:32px;height:28px;background:#ebebeb"></div><svg class="a" style="left:2052px;top:456px" width="8" height="13" viewBox="0 0 8 13"><path d="M5.2 1 V12.2 M5.2 1.3 L1.5 3.2" fill="none" stroke="#444" stroke-width="1.6"/></svg><svg class="a" style="left:2021px;top:457.5px" width="8" height="11" viewBox="0 0 8 11"><path d="M6 1.2 L1.8 5.5 L6 9.8" fill="none" stroke="#666" stroke-width="1.3"/></svg><svg class="a" style="left:2085px;top:457.5px" width="8" height="11" viewBox="0 0 8 11"><path d="M1.5 1.2 L5.7 5.5 L1.5 9.8" fill="none" stroke="#666" stroke-width="1.3"/></svg><div class="a" style="left:0;top:0;width:2130px;height:1355px;border:1px solid #8a8a8a"></div></body></html>
